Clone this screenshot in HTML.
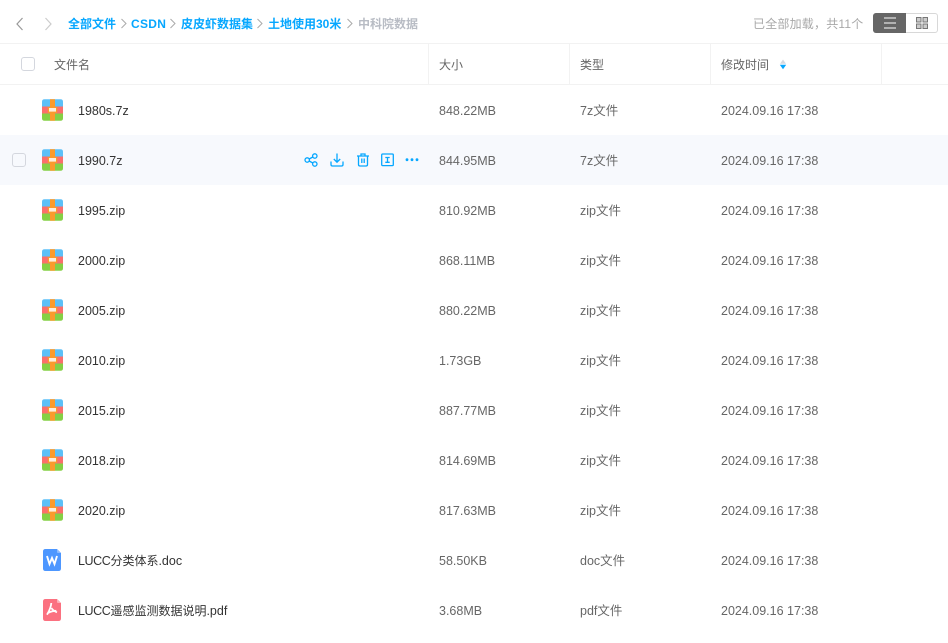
<!DOCTYPE html>
<html lang="zh-CN"><head><meta charset="utf-8"><title>文件列表</title>
<style>
*{box-sizing:border-box}
html,body{margin:0;padding:0;width:948px;height:643px;overflow:hidden;background:#fff}
body{position:relative;font-family:"Liberation Sans","Noto Sans CJK SC",sans-serif;font-size:12px;color:#666}
.a{position:absolute;white-space:nowrap}
.bc{top:15px;height:18px;line-height:18px;font-size:12px;font-weight:700;color:#06a7ff}
.hd{top:56px;height:18px;line-height:18px;color:#666}
.row{position:absolute;left:0;width:948px;height:50px}
.row span{position:absolute;top:17px;height:18px;line-height:18px;white-space:nowrap;font-size:12.5px}
.row em{font-style:normal;font-size:12px}
.row em.l{font-size:12.5px;letter-spacing:-.4px}
.n{left:78px;color:#333}
.s{left:439px;color:#666}
.t{left:580px;color:#666}
.d{left:721px;color:#666}
.ic{position:absolute;left:42px;top:14px}
.line{position:absolute;background:#f2f2f2}
.cb{position:absolute;width:14px;height:14px;border:1px solid #d4d7de;border-radius:3px;background:#fff}
</style></head><body>
<svg width="0" height="0" style="position:absolute"><defs>
<symbol id="zip" viewBox="0 0 21 22">
<path d="M2.500 0.200H18.500Q21 0.200 21 2.700V7.500H0V2.700Q0 0.200 2.500 0.200Z" fill="#5cc0f8"/>
<rect x="0" y="7.500" width="21" height="7" fill="#fb6e6c"/>
<path d="M0 14.500H21V19.200Q21 21.700 18.500 21.700H2.500Q0 21.700 0 19.200Z" fill="#84d045"/>
<rect x="8" y="0.200" width="5" height="21.500" fill="#fb9b2c"/>
<rect x="5.800" y="7.800" width="9.400" height="6" fill="#fb9b2c"/>
<rect x="7" y="9" width="7" height="3.600" fill="#ffeedd"/>
</symbol>
</defs></svg>

<svg class="a" style="left:14px;top:16px" width="12" height="16" viewBox="0 0 12 16"><path d="M8.500 2 L3 8 L8.500 14" fill="none" stroke="#999" stroke-width="1.200"/></svg>
<svg class="a" style="left:42px;top:16px" width="12" height="16" viewBox="0 0 12 16"><path d="M3.500 2 L9 8 L3.500 14" fill="none" stroke="#ccc" stroke-width="1.200"/></svg>

<div class="a bc" style="left:68px">全部文件</div>
<svg class="a" style="left:120px;top:18px" width="8" height="11" viewBox="0 0 8 11"><path d="M1.500 1 L6 5.500 L1.500 10" fill="none" stroke="#aaa" stroke-width="1"/></svg>
<div class="a bc" style="left:131px;letter-spacing:.3px">CSDN</div>
<svg class="a" style="left:169px;top:18px" width="8" height="11" viewBox="0 0 8 11"><path d="M1.500 1 L6 5.500 L1.500 10" fill="none" stroke="#aaa" stroke-width="1"/></svg>
<div class="a bc" style="left:181px">皮皮虾数据集</div>
<svg class="a" style="left:256px;top:18px" width="8" height="11" viewBox="0 0 8 11"><path d="M1.500 1 L6 5.500 L1.500 10" fill="none" stroke="#aaa" stroke-width="1"/></svg>
<div class="a bc" style="left:268px">土地使用30米</div>
<svg class="a" style="left:346px;top:18px" width="8" height="11" viewBox="0 0 8 11"><path d="M1.500 1 L6 5.500 L1.500 10" fill="none" stroke="#aaa" stroke-width="1"/></svg>
<div class="a bc" style="left:358px;color:#b8bcc4">中科院数据</div>

<div class="a" style="left:753px;top:15px;line-height:18px;color:#a8a8a8;letter-spacing:.2px">已全部加载，共11个</div>
<div class="a" style="left:873px;top:13px;width:65px;height:20px;border:1px solid #d8d8d8;border-radius:3px;background:#fff"></div>
<div class="a" style="left:873px;top:13px;width:33px;height:20px;background:#666;border-radius:3px 0 0 3px"></div>
<svg class="a" style="left:884px;top:17px" width="12" height="12" viewBox="0 0 12 12"><path d="M0 1H12M0 6H12M0 11H12" stroke="#fff" stroke-width="1.100"/></svg>
<svg class="a" style="left:916px;top:17px" width="12" height="12" viewBox="0 0 12 12"><rect x=".5" y=".5" width="4.500" height="4.500" fill="#ccc" stroke="#777"/><rect x="7" y=".5" width="4.500" height="4.500" fill="#ccc" stroke="#777"/><rect x=".5" y="7" width="4.500" height="4.500" fill="#ccc" stroke="#777"/><rect x="7" y="7" width="4.500" height="4.500" fill="#ccc" stroke="#777"/></svg>

<div class="line" style="left:0;top:43px;width:948px;height:1px"></div>
<div class="line" style="left:0;top:84px;width:948px;height:1px"></div>
<div class="line" style="left:428px;top:44px;width:1px;height:40px"></div>
<div class="line" style="left:569px;top:44px;width:1px;height:40px"></div>
<div class="line" style="left:710px;top:44px;width:1px;height:40px"></div>
<div class="line" style="left:881px;top:44px;width:1px;height:40px"></div>

<div class="cb" style="left:21px;top:57px"></div>
<div class="a hd" style="left:54px">文件名</div>
<div class="a hd" style="left:439px">大小</div>
<div class="a hd" style="left:580px">类型</div>
<div class="a hd" style="left:721px">修改时间</div>
<svg class="a" style="left:779px;top:59px" width="8" height="11" viewBox="0 0 8 11"><path d="M4 0.500 L7 4.700 H1 Z" fill="#d5d9e0"/><path d="M4 10.300 L7.200 5.800 H.8 Z" fill="#06a7ff"/></svg>

<div class="row" style="top:85px"><svg class="ic" width="21" height="22"><use href="#zip"/></svg><span class="n">1980s.7z</span><span class="s">848.22MB</span><span class="t">7z文件</span><span class="d">2024.09.16 17:38</span></div>

<div class="row" style="top:135px;background:#f7f9fd"><div class="cb" style="left:12px;top:18px;background:#f7f9fd"></div><svg class="ic" width="21" height="22"><use href="#zip"/></svg><span class="n">1990.7z</span><span class="s">844.95MB</span><span class="t">7z文件</span><span class="d">2024.09.16 17:38</span>
<svg class="a" style="left:304px;top:18px" width="14" height="14" viewBox="0 0 14 14" fill="none" stroke="#06a7ff" stroke-width="1.300"><circle cx="3.200" cy="7" r="2.200"/><circle cx="10.800" cy="3" r="2.200"/><circle cx="10.800" cy="11" r="2.200"/><path d="M5.200 6 L8.800 4 M5.200 8 L8.800 10"/></svg>
<svg class="a" style="left:330px;top:18px" width="14" height="14" viewBox="0 0 14 14" fill="none" stroke="#06a7ff" stroke-width="1.300"><path d="M7 .5V9M3.800 6 L7 9.200 L10.200 6M1 8.500V11.500Q1 13 2.500 13H11.500Q13 13 13 11.500V8.500"/></svg>
<svg class="a" style="left:356px;top:18px" width="14" height="14" viewBox="0 0 14 14" fill="none" stroke="#06a7ff" stroke-width="1.300"><path d="M1 3H13M5 3V1H9V3M2.500 3V11.500Q2.500 13 4 13H10Q11.500 13 11.500 11.500V3M5.800 5.500V10M8.200 5.500V10"/></svg>
<svg class="a" style="left:381px;top:18px" width="13" height="14" viewBox="0 0 13 14" fill="none" stroke="#06a7ff" stroke-width="1.300"><rect x=".7" y="1" width="11.600" height="11.600" rx="1"/><path d="M4.300 4.500H8.700M6.500 4.500V9.300M4.300 9.300H8.700"/></svg>
<svg class="a" style="left:405px;top:23px" width="14" height="4" viewBox="0 0 14 4" fill="#06a7ff"><circle cx="2" cy="1.700" r="1.400"/><circle cx="7" cy="1.700" r="1.400"/><circle cx="12" cy="1.700" r="1.400"/></svg>
</div>

<div class="row" style="top:185px"><svg class="ic" width="21" height="22"><use href="#zip"/></svg><span class="n">1995.zip</span><span class="s">810.92MB</span><span class="t">zip文件</span><span class="d">2024.09.16 17:38</span></div>
<div class="row" style="top:235px"><svg class="ic" width="21" height="22"><use href="#zip"/></svg><span class="n">2000.zip</span><span class="s">868.11MB</span><span class="t">zip文件</span><span class="d">2024.09.16 17:38</span></div>
<div class="row" style="top:285px"><svg class="ic" width="21" height="22"><use href="#zip"/></svg><span class="n">2005.zip</span><span class="s">880.22MB</span><span class="t">zip文件</span><span class="d">2024.09.16 17:38</span></div>
<div class="row" style="top:335px"><svg class="ic" width="21" height="22"><use href="#zip"/></svg><span class="n">2010.zip</span><span class="s">1.73GB</span><span class="t">zip文件</span><span class="d">2024.09.16 17:38</span></div>
<div class="row" style="top:385px"><svg class="ic" width="21" height="22"><use href="#zip"/></svg><span class="n">2015.zip</span><span class="s">887.77MB</span><span class="t">zip文件</span><span class="d">2024.09.16 17:38</span></div>
<div class="row" style="top:435px"><svg class="ic" width="21" height="22"><use href="#zip"/></svg><span class="n">2018.zip</span><span class="s">814.69MB</span><span class="t">zip文件</span><span class="d">2024.09.16 17:38</span></div>
<div class="row" style="top:485px"><svg class="ic" width="21" height="22"><use href="#zip"/></svg><span class="n">2020.zip</span><span class="s">817.63MB</span><span class="t">zip文件</span><span class="d">2024.09.16 17:38</span></div>

<div class="row" style="top:535px"><svg class="ic" style="left:43px;top:14px" width="18" height="22" viewBox="0 0 18 22"><path d="M2.500 0H14L18 4V19.500Q18 22 15.500 22H2.500Q0 22 0 19.500V2.500Q0 0 2.500 0Z" fill="#4d97ff"/><path d="M14 0L18 4H15Q14 4 14 3Z" fill="#8ebcff"/><path d="M4 7L6.500 15L9 9L11.500 15L14 7" fill="none" stroke="#fff" stroke-width="1.900"/></svg><span class="n"><em class="l">LUCC</em><em>分类体系</em>.doc</span><span class="s">58.50KB</span><span class="t">doc文件</span><span class="d">2024.09.16 17:38</span></div>

<div class="row" style="top:585px"><svg class="ic" style="left:43px;top:14px" width="18" height="22" viewBox="0 0 18 22"><path d="M2.500 0H14L18 4V19.500Q18 22 15.500 22H2.500Q0 22 0 19.500V2.500Q0 0 2.500 0Z" fill="#fb7180"/><path d="M14 0L18 4H15Q14 4 14 3Z" fill="#fdb0b8"/><path d="M8.300 4Q8 9 4 15.700M8.300 9Q10.500 12 14 13.300M5 14Q9 11.800 13.300 11.800" fill="none" stroke="#fff" stroke-width="1.800"/></svg><span class="n"><em class="l">LUCC</em><em>遥感监测数据说明</em>.pdf</span><span class="s">3.68MB</span><span class="t">pdf文件</span><span class="d">2024.09.16 17:38</span></div>
</body></html>
